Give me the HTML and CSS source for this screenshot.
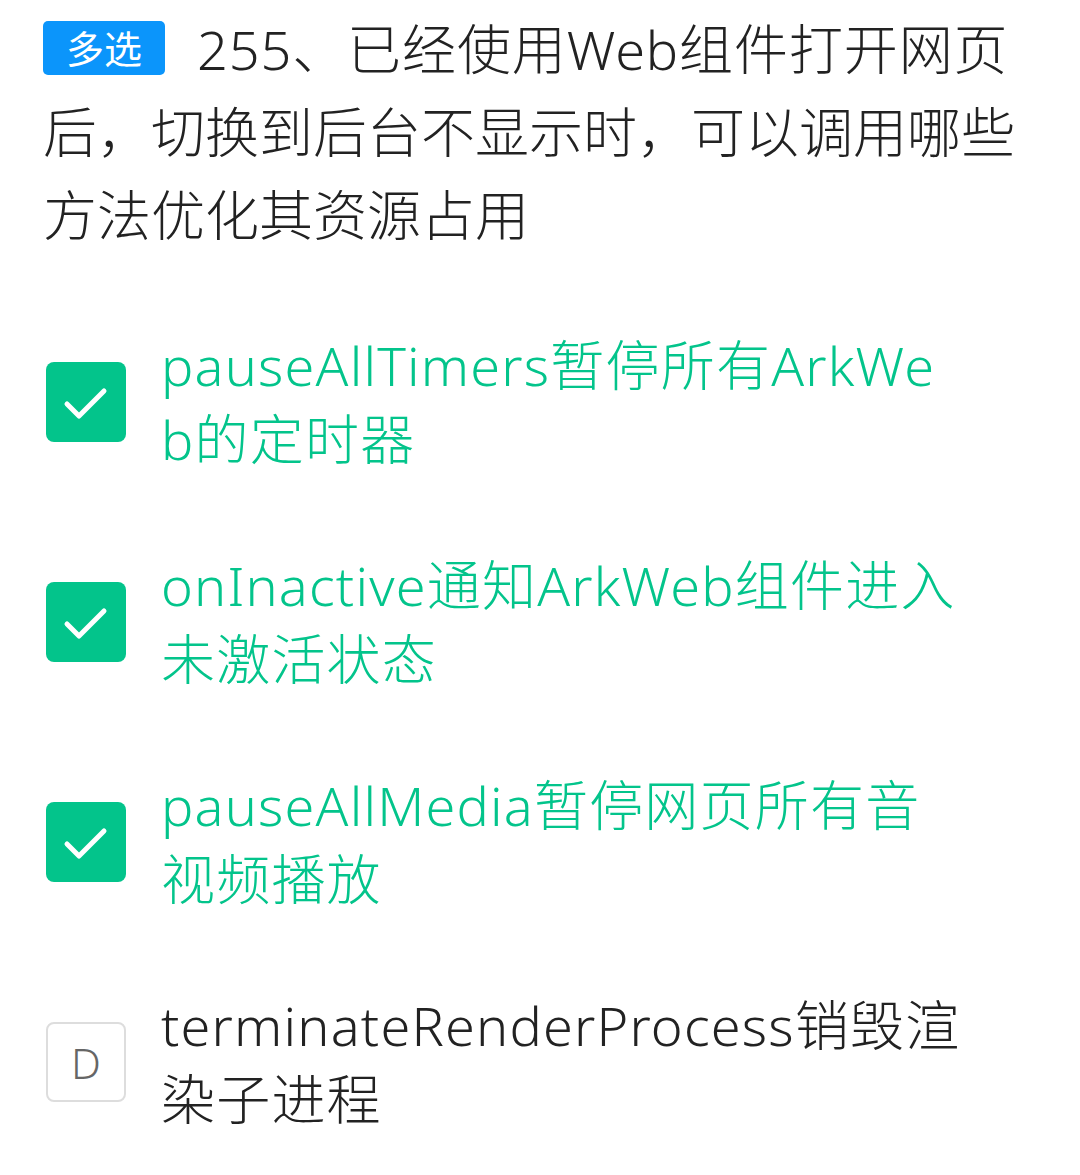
FILE: index.html
```html
<!DOCTYPE html>
<html lang="zh-CN">
<head>
<meta charset="utf-8">
<link rel="stylesheet" href="styles.css">
</head>
<body>
<div class="page">
  <div class="question"><span class="badge">多选</span>255、已经使用Web组件打开网页后，切换到后台不显示时，可以调用哪些方法优化其资源占用</div>
  <div class="options">
    <div class="option selected">
      <div class="box"><svg width="80" height="80" viewBox="0 0 80 80"><path d="M21 42 L33 54 L58 29" fill="none" stroke="#fff" stroke-width="5" stroke-linecap="round" stroke-linejoin="round"/></svg></div>
      <div class="text">pauseAllTimers暂停所有ArkWeb的定时器</div>
    </div>
    <div class="option selected">
      <div class="box"><svg width="80" height="80" viewBox="0 0 80 80"><path d="M21 42 L33 54 L58 29" fill="none" stroke="#fff" stroke-width="5" stroke-linecap="round" stroke-linejoin="round"/></svg></div>
      <div class="text">onInactive通知ArkWeb组件进入未激活状态</div>
    </div>
    <div class="option selected">
      <div class="box"><svg width="80" height="80" viewBox="0 0 80 80"><path d="M21 42 L33 54 L58 29" fill="none" stroke="#fff" stroke-width="5" stroke-linecap="round" stroke-linejoin="round"/></svg></div>
      <div class="text">pauseAllMedia暂停网页所有音视频播放</div>
    </div>
    <div class="option">
      <div class="box plain">D</div>
      <div class="text">terminateRenderProcess销毁渲染子进程</div>
    </div>
  </div>
</div>
</body>
</html>
```
FILE: styles.css
```css
html, body {
  margin: 0;
  padding: 0;
  background: #ffffff;
}
body {
  font-family: "Noto Sans", "Noto Sans CJK SC", sans-serif;
  font-weight: 300;
  color: #222222;
}
.page {
  padding: 8px 43px 0 43px;
}
.question {
  font-size: 54px;
  line-height: 83px;
  width: 994px;
  word-break: break-all;
  color: #222222;
}
.question::first-line {
  letter-spacing: 0.9px;
}
.badge {
  float: left;
  margin-top: 13px;
  height: 54px;
  line-height: 54px;
  padding: 0 23px;
  margin-right: 32px;
  font-size: 38px;
  font-weight: 400;
  letter-spacing: 0;
  color: #ffffff;
  background: #0b95fb;
  border-radius: 5px;
}
.options {
  display: flex;
  flex-direction: column;
  gap: 72px;
  margin-top: 71px;
  padding-left: 3px;
}
.option {
  display: flex;
  align-items: center;
  gap: 35px;
}
.box {
  flex: 0 0 80px;
  width: 80px;
  height: 80px;
  border-radius: 8px;
  box-sizing: border-box;
  display: flex;
  align-items: center;
  justify-content: center;
}
.selected .box {
  background: #03c48b;
}
.box.plain {
  border: 2px solid #dddddd;
  color: #666666;
  font-size: 42px;
  background: #ffffff;
}
.text {
  width: 802px;
  font-size: 54px;
  line-height: 74px;
  letter-spacing: 1.2px;
  word-break: break-all;
  color: #222222;
}
.selected .text {
  color: #03c48b;
}
```
